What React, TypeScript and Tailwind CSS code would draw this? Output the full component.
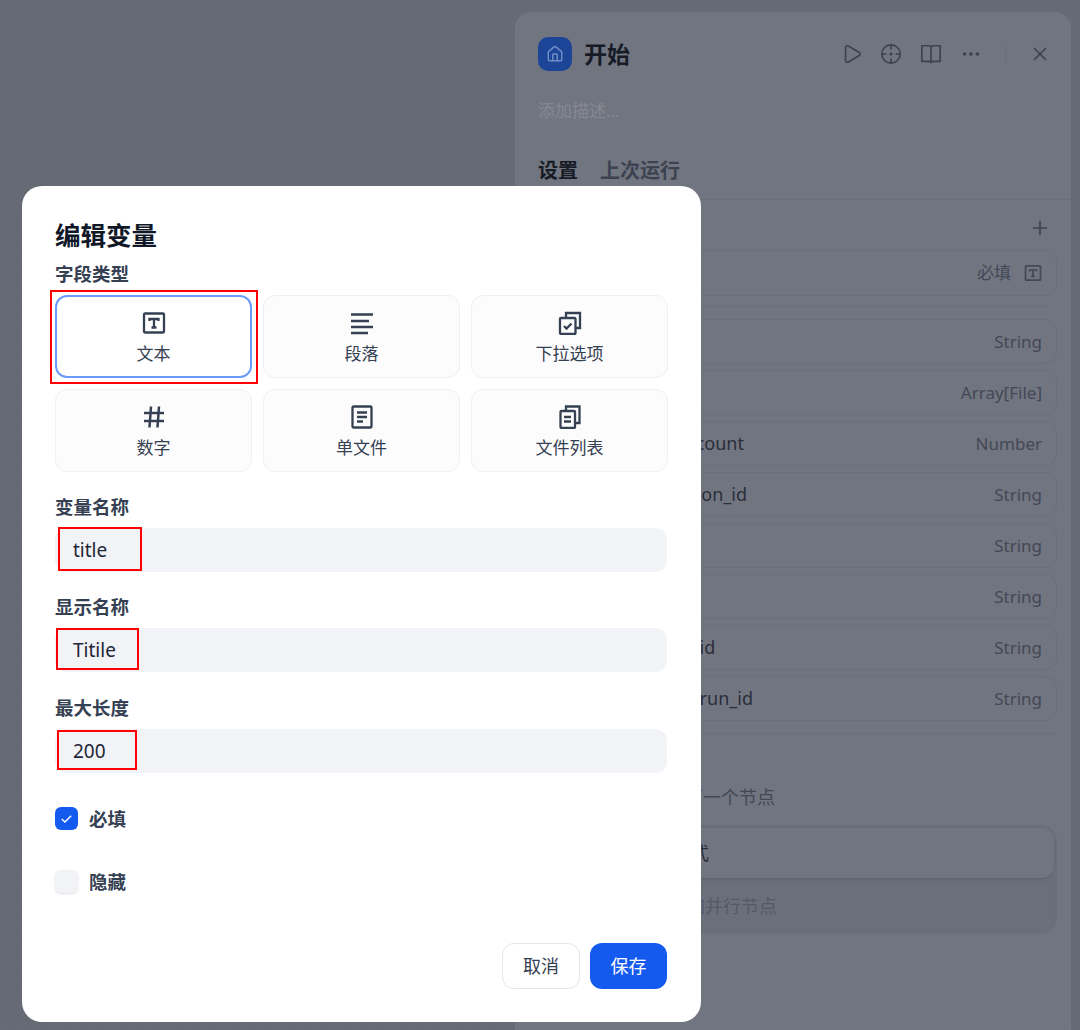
import { ReactNode } from 'react'
import { House, Play, Ellipsis, X, Plus } from 'lucide-react'

const font = 'font-["Noto_Sans","Noto_Sans_CJK_SC",sans-serif]'

function TextIcon({ className }: { className?: string }) {
  return (
    <svg viewBox="0 0 24 24" fill="none" stroke="currentColor" className={className}>
      <rect x="2" y="2.500" width="20" height="19" rx="1" strokeWidth="2.300" />
      <path d="M7.500 10V8h9v2M12 8v8.500M9.500 16.500h5" strokeWidth="2.300" />
    </svg>
  )
}

function ParagraphIcon() {
  return (
    <svg viewBox="0 0 24 24" fill="none" stroke="currentColor" strokeWidth="2.300" className="w-6 h-6">
      <path d="M1 3.500h22M1 10h18M1 16h22M1 22h17" />
    </svg>
  )
}

function SelectIcon() {
  return (
    <svg viewBox="0 0 24 24" fill="none" stroke="currentColor" strokeWidth="2.300" className="w-6 h-6">
      <path d="M8 6.500V2h14v15h-4.500" />
      <rect x="2" y="7" width="15.500" height="16" rx="1" />
      <path d="M6 15l2.500 2.500 5-5" />
    </svg>
  )
}

function HashIcon() {
  return (
    <svg viewBox="0 0 24 24" fill="none" stroke="currentColor" strokeWidth="2.500" className="w-6 h-6">
      <path d="M9 1.500 7.500 22.500M17 1.500l-1.500 21M2 8h20M2 16h20" />
    </svg>
  )
}

function FileIcon() {
  return (
    <svg viewBox="0 0 24 24" fill="none" stroke="currentColor" strokeWidth="2.300" className="w-6 h-6">
      <rect x="2.500" y="1.500" width="19" height="21" rx="1" />
      <path d="M7 7.500h10M7 12h10M7 16.500h6" />
    </svg>
  )
}

function FilesIcon() {
  return (
    <svg viewBox="0 0 24 24" fill="none" stroke="currentColor" strokeWidth="2.300" className="w-6 h-6">
      <path d="M8 6V1.500h13.500V18H17" />
      <rect x="2.500" y="6" width="14.500" height="17" rx="1" />
      <path d="M6 12h7M6 16.500h7" />
    </svg>
  )
}

function TargetIcon() {
  return (
    <svg viewBox="0 0 24 24" fill="none" stroke="currentColor" strokeWidth="1.800" className="w-[22px] h-[22px]">
      <circle cx="12" cy="12" r="10" />
      <path d="M12 2v5M12 17v5M2 12h5M17 12h5" />
      <circle cx="12" cy="12" r="0.800" fill="currentColor" />
    </svg>
  )
}

function BookIcon() {
  return (
    <svg viewBox="0 0 24 24" fill="none" stroke="currentColor" strokeWidth="1.800" className="w-[22px] h-[22px]">
      <path d="M2 3h7.500c1.500 0 2.500 1 2.500 2.500V22c0-1.500-1-2-2.500-2H2zM22 3h-7.500C13 3 12 4 12 5.500V22c0-1.500 1-2 2.500-2H22z" />
    </svg>
  )
}

function TypeCard({ icon, label, active }: { icon: ReactNode; label: string; active?: boolean }) {
  return (
    <div
      className={
        active
          ? 'h-[83px] rounded-xl border-2 border-[#6b9bf8] bg-white flex flex-col items-center pt-[14px] text-[#354052]'
          : 'h-[83px] rounded-xl border border-[#eef0f3] bg-[#fcfcfd] flex flex-col items-center pt-[15px] text-[#354052]'
      }
    >
      {icon}
      <span className="mt-[6px] text-[17px] leading-[26px]">{label}</span>
    </div>
  )
}

function Field({ label, value, className }: { label: string; value: string; className: string }) {
  return (
    <div className={className}>
      <div className="text-[18.500px] leading-[26px] font-bold text-[#354052]">{label}</div>
      <div className="mt-2 h-[44px] rounded-xl bg-[#f2f3f7] px-[18px] flex items-center text-[19px] text-[#1e2636]">
        {value}
      </div>
    </div>
  )
}

function VarRow({ name, type, className }: { name: string; type: string; className: string }) {
  return (
    <div className={className}>
      <span className="text-[18px] text-[#2a2e3b]">{name}</span>
      <span className="text-[17px] text-[#434856]">{type}</span>
    </div>
  )
}

const rowClass =
  'h-[45px] rounded-xl border border-[#6b6f7a] pl-[76px] pr-[14px] flex items-center justify-between'

export default function App() {
  return (
    <div className={`relative w-[1080px] h-[1030px] overflow-hidden bg-[#666a75] bg-[radial-gradient(#696d78_1px,transparent_1px)] bg-[size:14px_14px] pl-[515px] pt-[12px] ${font}`}>
      {/* panneau de droite, derrière le voile */}
      <div className="w-[556px] h-[1018px] rounded-t-2xl bg-[#717580]">
        <div className="flex items-center pl-[23px] pr-[20px] pt-[25px]">
          <div className="w-[34px] h-[34px] rounded-[10px] bg-[#1d4597] flex items-center justify-center text-[#6f8cc4]">
            <House className="w-[18px] h-[18px]" />
          </div>
          <span className="ml-3 text-[23px] leading-[34px] font-bold text-[#171b26]">开始</span>
          <div className="ml-auto flex items-center gap-[18px] text-[#3d4250]">
            <Play className="w-[22px] h-[22px] mr-[-1px]" strokeWidth={1.8} />
            <TargetIcon />
            <BookIcon />
            <Ellipsis className="w-[22px] h-[22px]" />
            <div className="mx-[5px] w-px h-[20px] bg-[#6b6f7a]" />
            <X className="w-[22px] h-[22px]" strokeWidth={1.8} />
          </div>
        </div>
        <div className="pl-[23px] mt-[27px] text-[17px] leading-[26px] text-[#858892]">添加描述...</div>
        <div className="pl-[23px] mt-[32px] flex gap-[22px] text-[20px] leading-[30px] font-bold pb-[13px] border-b border-[#6b6f7a]">
          <span className="text-[#171b26]">设置</span>
          <span className="text-[#3d4250]">上次运行</span>
        </div>
        <div className="flex justify-end pr-[20px] pt-[17px] text-[#3d4250]">
          <Plus className="w-[22px] h-[22px]" strokeWidth={1.8} />
        </div>
        <div className="mx-[22px] mt-[11px] pb-[10px] border-b border-[#6b6f7a]">
          <div className="h-[46px] w-[520px] rounded-xl border border-[#6b6f7a] pr-[14px] flex items-center justify-end gap-[13px] text-[17px] text-[#434856]">
            必填
            <TextIcon className="w-[18px] h-[18px]" />
          </div>
        </div>
        <div className="mx-[22px] mt-[12px] w-[520px] flex flex-col gap-[6px] pb-[12px] border-b border-[#6b6f7a]">
          <VarRow name="query" type="String" className={rowClass} />
          <VarRow name="files" type="Array[File]" className={rowClass} />
          <VarRow name="dialogue_count" type="Number" className={rowClass} />
          <VarRow name="conversation_id" type="String" className={rowClass} />
          <VarRow name="user_id" type="String" className={rowClass} />
          <VarRow name="app_id" type="String" className={rowClass} />
          <VarRow name="workflow_id" type="String" className={rowClass} />
          <VarRow name="workflow_run_id" type="String" className={rowClass} />
        </div>
        <div className="pl-[26px] mt-[50px] text-[18px] leading-[26px] text-[#434856]">添加此工作流中的下一个节点</div>
        <div className="ml-[22px] mt-[15px] w-[520px] h-[109px] rounded-2xl bg-[#6b6f7a] p-[3px]">
          <div className="h-[50px] rounded-xl bg-[#717580] pl-[61px] flex items-center text-[18px] text-[#2a2e3b] shadow-sm">
            选择节点模式
          </div>
          <div className="mt-[3px] h-[50px] rounded-xl border border-dashed border-[#656974] pl-[128px] flex items-center text-[18px] text-[#565a67]">
            添加并行节点
          </div>
        </div>
      </div>

      {/* boîte de dialogue */}
      <div className="absolute left-[22px] top-[186px] w-[679px] h-[836px] rounded-[20px] bg-white px-[33px] pt-[31px]">
        <h2 className="text-[25.500px] leading-[36px] font-bold text-[#101828]">编辑变量</h2>
        <div className="mt-[8px] text-[18.500px] leading-[26px] font-bold text-[#354052]">字段类型</div>
        <div className="mt-2 w-[613px] grid grid-cols-3 gap-[11px]">
          <TypeCard active icon={<TextIcon className="w-6 h-6" />} label="文本" />
          <TypeCard icon={<ParagraphIcon />} label="段落" />
          <TypeCard icon={<SelectIcon />} label="下拉选项" />
          <TypeCard icon={<HashIcon />} label="数字" />
          <TypeCard icon={<FileIcon />} label="单文件" />
          <TypeCard icon={<FilesIcon />} label="文件列表" />
        </div>

        <Field label="变量名称" value="title" className="mt-[22px] w-[612px]" />
        <Field label="显示名称" value="Titile" className="mt-[22px] w-[612px]" />
        <Field label="最大长度" value="200" className="mt-[23px] w-[612px]" />

        <div className="mt-[34px] flex items-center gap-[11px] h-[23px]">
          <div className="w-[23px] h-[23px] rounded-[6px] bg-[#155aef] flex items-center justify-center">
            <svg viewBox="0 0 16 16" fill="none" stroke="white" strokeWidth="1.500" className="w-[15px] h-[15px]">
              <path d="M3 8.500l3.300 3.300L13 5" />
            </svg>
          </div>
          <span className="text-[18.500px] font-bold text-[#354052]">必填</span>
        </div>
        <div className="mt-[40px] flex items-center gap-[11px] h-[23px]">
          <div className="w-[23px] h-[23px] rounded-[6px] bg-[#f2f3f7] shadow-sm" />
          <span className="text-[18.500px] font-bold text-[#354052]">隐藏</span>
        </div>

        <div className="mt-[50px] w-[612px] flex justify-end gap-[10px]">
          <button className="w-[78px] h-[46px] rounded-xl border border-[#e4e6ea] bg-white text-[18px] text-[#354052]">取消</button>
          <button className="w-[77px] h-[46px] rounded-xl bg-[#155aef] text-[18px] text-white">保存</button>
        </div>
      </div>

      {/* annotations rouges */}
      <div className="absolute left-[50px] top-[290px] w-[208px] h-[94px] border-2 border-[#ff0000]" />
      <div className="absolute left-[58px] top-[527px] w-[84px] h-[44px] border-2 border-[#ff0000]" />
      <div className="absolute left-[56px] top-[628px] w-[83px] h-[42px] border-2 border-[#ff0000]" />
      <div className="absolute left-[57px] top-[730px] w-[80px] h-[40px] border-2 border-[#ff0000]" />
    </div>
  )
}
